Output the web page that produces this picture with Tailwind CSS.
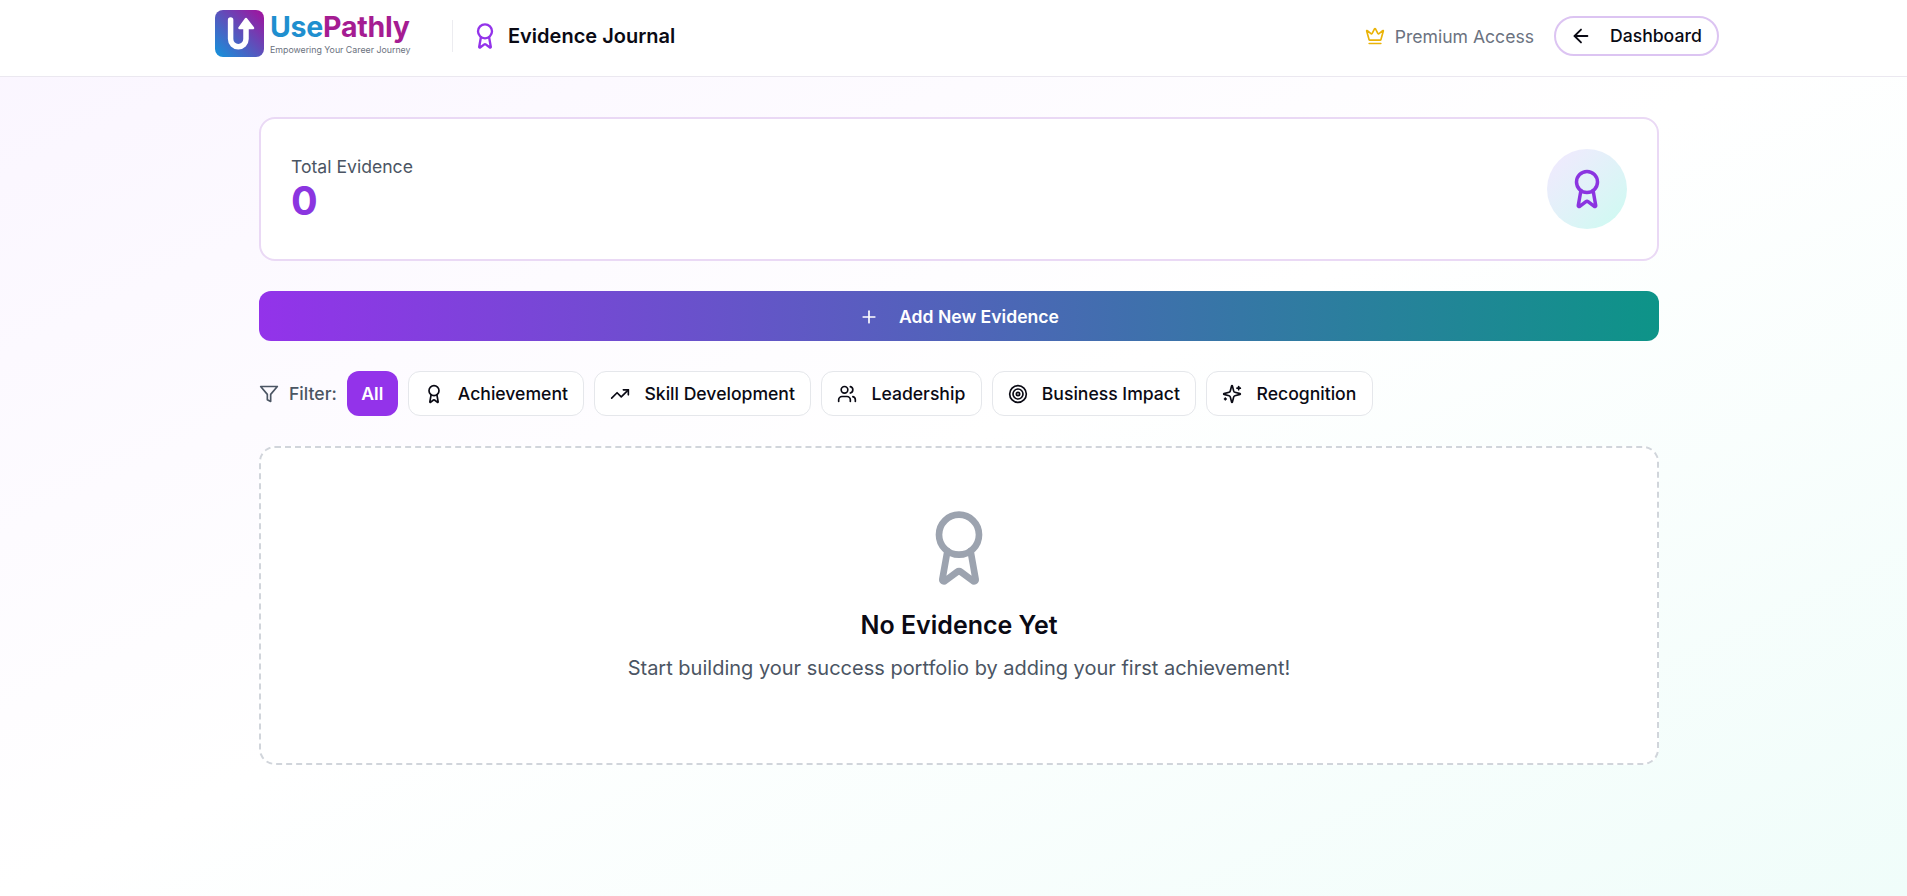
<!DOCTYPE html>
<html lang="en">
<head>
  <meta charset="UTF-8">
  <title>Evidence Journal</title>
  <script src="https://cdn.jsdelivr.net/npm/@tailwindcss/browser@4"></script>
</head>
<body class="min-h-screen bg-gradient-to-br from-[#faf5ff] via-white to-[#f0fdfa] font-['Inter',sans-serif] text-[#0a0a14]">
  <!-- header -->
  <header class="h-[77px] bg-white border-b border-[#ebe8f0] pl-[215px] pr-[188px] pb-[4px] flex items-center justify-between">
    <div class="flex items-center">
      <div class="flex items-center w-[202px] h-[50px] -mt-[5px]">
        <svg width="49" height="47" viewBox="0 0 49 47">
          <defs>
            <linearGradient id="logo" x1="0" y1="1" x2="1" y2="0">
              <stop offset="0" stop-color="#1295dc"/>
              <stop offset="1" stop-color="#a40f9c"/>
            </linearGradient>
          </defs>
          <rect width="49" height="47" rx="8" fill="url(#logo)"/>
          <path d="M15.6 10v19a7.7 7.7 0 0 0 15.4 0V16" fill="none" stroke="#fff" stroke-width="5.5" stroke-linecap="round"/>
          <path d="M24.5 18 31 9l7 9z" fill="#fff" stroke="#fff" stroke-width="2.5" stroke-linejoin="round"/>
        </svg>
        <div class="ml-[6px] flex flex-col">
          <span class="text-[28.5px] leading-[30px] font-bold tracking-[-0.25px]"><span class="text-[#1f8fcf]">Use</span><span class="text-[#a51c92]">Pathly</span></span>
          <span class="mt-[2px] text-[8.8px] leading-[11px] text-[#6b7280] whitespace-nowrap">Empowering Your Career Journey</span>
        </div>
      </div>
      <div class="w-px h-8 bg-[#ececf0] ml-[35px]"></div>
      <svg class="ml-[18px] text-[#9333ea]" width="28" height="28" viewBox="0 0 24 24" fill="none" stroke="currentColor" stroke-width="2" stroke-linecap="round" stroke-linejoin="round"><path d="m15.477 12.89 1.515 8.526a.5.5 0 0 1-.81.47l-3.58-2.687a1 1 0 0 0-1.197 0l-3.586 2.686a.5.5 0 0 1-.81-.469l1.514-8.526"/><circle cx="12" cy="8" r="6"/></svg>
      <h1 class="ml-[9px] text-[20px] font-semibold leading-7">Evidence Journal</h1>
    </div>
    <div class="flex items-center">
      <svg class="text-[#eab308]" width="20" height="20" viewBox="0 0 24 24" fill="none" stroke="currentColor" stroke-width="2" stroke-linecap="round" stroke-linejoin="round"><path d="M11.562 3.266a.5.5 0 0 1 .876 0L15.39 8.87a1 1 0 0 0 1.516.294L21.183 5.5a.5.5 0 0 1 .798.519l-2.834 10.246a1 1 0 0 1-.956.734H5.81a1 1 0 0 1-.957-.734L2.02 6.02a.5.5 0 0 1 .798-.519l4.276 3.664a1 1 0 0 0 1.516-.294z"/><path d="M5 21h14"/></svg>
      <span class="ml-[10px] mt-[2px] text-[#6b7280] text-[17.6px]">Premium Access</span>
      <button class="ml-5 h-[40px] w-[165px] pl-[14px] rounded-full border-2 border-[#dcc4f2] bg-white flex items-center font-medium text-[17.6px]">
        <svg width="22" height="22" viewBox="0 0 24 24" fill="none" stroke="currentColor" stroke-width="2" stroke-linecap="round" stroke-linejoin="round"><path d="m12 19-7-7 7-7"/><path d="M19 12H5"/></svg>
        <span class="ml-[18px] mt-px">Dashboard</span>
      </button>
    </div>
  </header>

  <main class="ml-[259px] w-[1400px] pt-10 flex flex-col">
    <!-- stat card -->
    <section class="h-[144px] rounded-2xl border-2 border-[#ead9f5] bg-white px-[30px] flex items-center justify-between">
      <div class="flex flex-col mb-[5px]">
        <span class="text-[17.6px] leading-7 text-[#4b5563]">Total Evidence</span>
        <span class="text-[39.6px] leading-10 font-bold text-[#8b35e0]">0</span>
      </div>
      <div class="w-20 h-20 rounded-full bg-gradient-to-br from-[#f3e8ff] to-[#ccfbf1] flex items-center justify-center">
        <svg class="text-[#8b35e0]" width="42" height="42" viewBox="0 0 24 24" fill="none" stroke="currentColor" stroke-width="2" stroke-linecap="round" stroke-linejoin="round"><path d="m15.477 12.89 1.515 8.526a.5.5 0 0 1-.81.47l-3.58-2.687a1 1 0 0 0-1.197 0l-3.586 2.686a.5.5 0 0 1-.81-.469l1.514-8.526"/><circle cx="12" cy="8" r="6"/></svg>
      </div>
    </section>

    <button class="mt-[30px] h-[50px] pt-[2px] rounded-xl bg-[linear-gradient(to_right,#9333ea,#0d9488)] text-white font-semibold text-[17.6px] flex items-center justify-center gap-5">
      <svg width="20" height="20" viewBox="0 0 24 24" fill="none" stroke="currentColor" stroke-width="2" stroke-linecap="round" stroke-linejoin="round"><path d="M5 12h14"/><path d="M12 5v14"/></svg>
      Add New Evidence
    </button>

    <!-- filters -->
    <div class="mt-[30px] flex items-center h-[45px] gap-[10px]">
      <svg class="text-[#4b5563]" width="20" height="20" viewBox="0 0 24 24" fill="none" stroke="currentColor" stroke-width="2" stroke-linecap="round" stroke-linejoin="round"><polygon points="22 3 2 3 10 12.46 10 19 14 21 14 12.46 22 3"/></svg>
      <span class="pt-px text-[17.6px] font-medium text-[#4b5563]">Filter:</span>
      <button class="h-[45px] px-[14.5px] pt-px rounded-xl bg-[#9333ea] text-white font-semibold text-[17.6px]">All</button>
      <button class="h-[45px] pl-[15px] pr-[15.5px] pt-px rounded-xl border border-[#e5e7eb] bg-white flex items-center gap-[14px] font-medium text-[17.6px]">
        <svg width="20" height="20" viewBox="0 0 24 24" fill="none" stroke="currentColor" stroke-width="2" stroke-linecap="round" stroke-linejoin="round"><path d="m15.477 12.89 1.515 8.526a.5.5 0 0 1-.81.47l-3.58-2.687a1 1 0 0 0-1.197 0l-3.586 2.686a.5.5 0 0 1-.81-.469l1.514-8.526"/><circle cx="12" cy="8" r="6"/></svg>
        Achievement
      </button>
      <button class="h-[45px] pl-[15px] pr-[15.5px] pt-px rounded-xl border border-[#e5e7eb] bg-white flex items-center gap-[14px] font-medium text-[17.6px]">
        <svg width="20" height="20" viewBox="0 0 24 24" fill="none" stroke="currentColor" stroke-width="2" stroke-linecap="round" stroke-linejoin="round"><polyline points="22 7 13.5 15.5 8.5 10.5 2 17"/><polyline points="16 7 22 7 22 13"/></svg>
        Skill Development
      </button>
      <button class="h-[45px] pl-[15px] pr-[15.5px] pt-px rounded-xl border border-[#e5e7eb] bg-white flex items-center gap-[14px] font-medium text-[17.6px]">
        <svg width="20" height="20" viewBox="0 0 24 24" fill="none" stroke="currentColor" stroke-width="2" stroke-linecap="round" stroke-linejoin="round"><path d="M16 21v-2a4 4 0 0 0-4-4H6a4 4 0 0 0-4 4v2"/><circle cx="9" cy="7" r="4"/><path d="M22 21v-2a4 4 0 0 0-3-3.87"/><path d="M16 3.13a4 4 0 0 1 0 7.75"/></svg>
        Leadership
      </button>
      <button class="h-[45px] pl-[15px] pr-[15.5px] pt-px rounded-xl border border-[#e5e7eb] bg-white flex items-center gap-[14px] font-medium text-[17.6px]">
        <svg width="20" height="20" viewBox="0 0 24 24" fill="none" stroke="currentColor" stroke-width="2" stroke-linecap="round" stroke-linejoin="round"><circle cx="12" cy="12" r="10"/><circle cx="12" cy="12" r="6"/><circle cx="12" cy="12" r="2"/></svg>
        Business Impact
      </button>
      <button class="h-[45px] pl-[15px] pr-[15.5px] pt-px rounded-xl border border-[#e5e7eb] bg-white flex items-center gap-[14px] font-medium text-[17.6px]">
        <svg width="20" height="20" viewBox="0 0 24 24" fill="none" stroke="currentColor" stroke-width="2" stroke-linecap="round" stroke-linejoin="round"><path d="M9.937 15.5A2 2 0 0 0 8.5 14.063l-6.135-1.582a.5.5 0 0 1 0-.962L8.5 9.936A2 2 0 0 0 9.937 8.5l1.582-6.135a.5.5 0 0 1 .963 0L14.063 8.5A2 2 0 0 0 15.5 9.937l6.135 1.581a.5.5 0 0 1 0 .964L15.5 14.063a2 2 0 0 0-1.437 1.437l-1.582 6.135a.5.5 0 0 1-.963 0z"/><path d="M20 3v4"/><path d="M22 5h-4"/><path d="M4 17v2"/><path d="M5 18H3"/></svg>
        Recognition
      </button>
    </div>

    <!-- empty state -->
    <section class="mt-[30px] h-[319px] rounded-2xl border-2 border-dashed border-[#d1d5db] bg-white flex flex-col items-center pt-[60px]">
      <svg class="text-[#9ca3af]" width="80" height="80" viewBox="0 0 24 24" fill="none" stroke="currentColor" stroke-width="2" stroke-linecap="round" stroke-linejoin="round"><path d="m15.477 12.89 1.515 8.526a.5.5 0 0 1-.81.47l-3.58-2.687a1 1 0 0 0-1.197 0l-3.586 2.686a.5.5 0 0 1-.81-.469l1.514-8.526"/><circle cx="12" cy="8" r="6"/></svg>
      <h2 class="mt-[21px] text-[25px] leading-8 font-semibold">No Evidence Yet</h2>
      <p class="mt-[13px] text-xl leading-7 text-[#4b5563]">Start building your success portfolio by adding your first achievement!</p>
    </section>
  </main>
</body>
</html>
